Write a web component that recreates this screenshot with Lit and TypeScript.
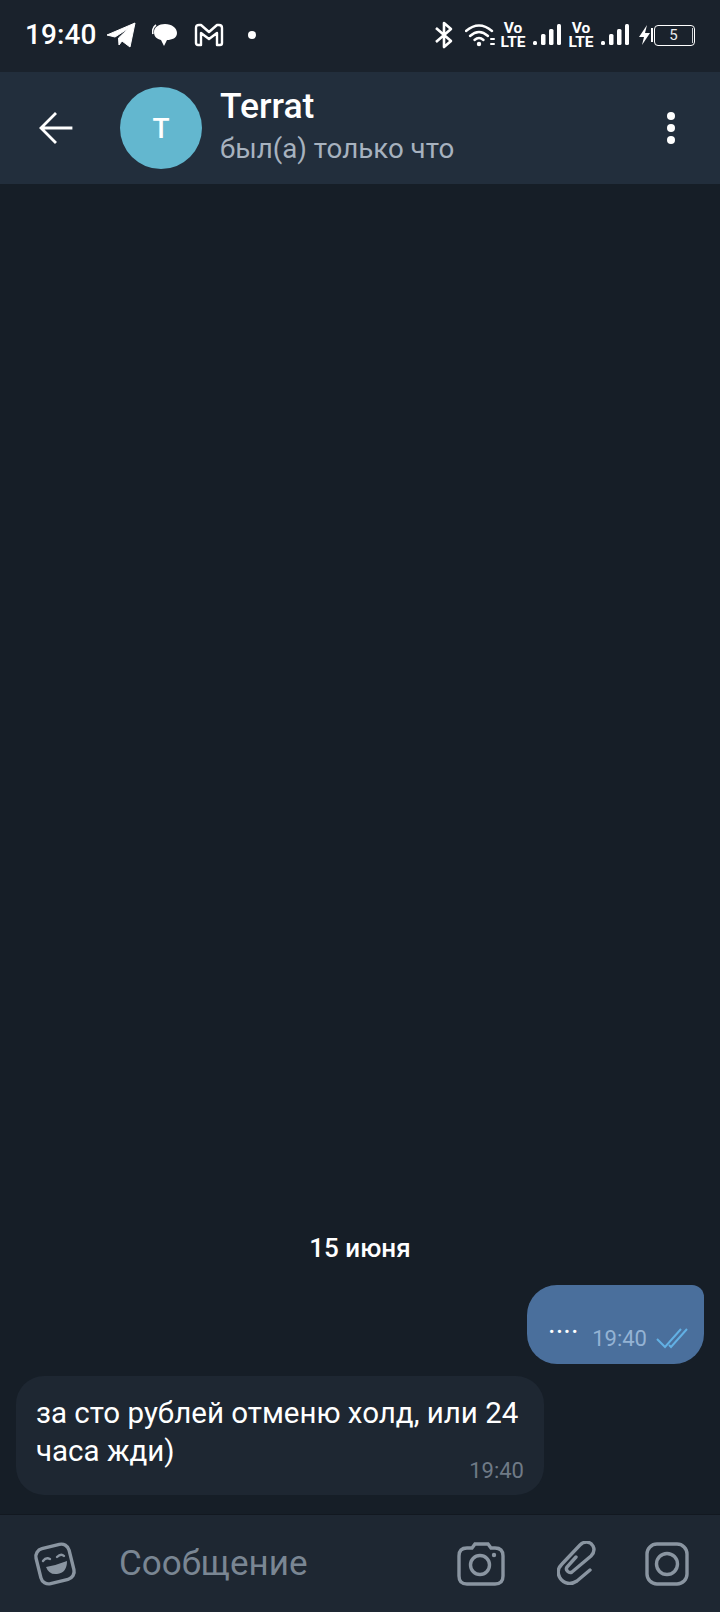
import { LitElement, html, css } from "lit";
import { customElement } from "lit/decorators.js";

@customElement("app-root")
export class AppRoot extends LitElement {
  static styles = css`
    :host { display: block; width: 720px; height: 1612px; overflow: hidden; background: #161e27; font-family: Roboto, "Noto Sans", sans-serif; color: #fff; }
    .page { display: flex; flex-direction: column; height: 1612px; }
    svg { display: block; flex: none; }
    .status { height: 72px; flex: none; background: #1a222c; display: flex; align-items: center; padding: 0 25px 2px 25px; box-sizing: border-box; }
    .clock { font-size: 28px; font-weight: 500; letter-spacing: 0.1px; width: 81px; line-height: 32px; }
    .left { display: flex; align-items: center; }
    .tg { margin-right: 16px; }
    .bub { margin-right: 16px; }
    .gm { margin-right: 24px; }
    .spacer { flex: 1; }
    .right { display: flex; align-items: center; }
    .bt { margin-right: 11px; }
    .wifi { margin-right: 5px; }
    .volte { font-weight: 700; font-size: 15.5px; line-height: 14px; width: 26px; text-align: center; white-space: pre-line; }
    .bars { margin: 0 7px; }
    .bars.last { margin-right: 9px; }
    .batt { width: 41px; height: 21px; box-sizing: border-box; border: 1.5px solid #fff; border-radius: 4px; font-size: 15px; line-height: 18px; text-align: center; color: #e8eaec; position: relative; padding-right: 2px; }
    .batt::after { content: ""; position: absolute; right: 1px; top: 2px; bottom: 2px; width: 1.5px; background: #cfd3d6; }
    .header { height: 112px; flex: none; background: #222e3c; display: flex; align-items: center; box-sizing: border-box; padding: 0 0 0 39px; }
    .back { margin-right: 47px; }
    .avatar { width: 82px; height: 82px; border-radius: 50%; background: #63b7cf; display: flex; align-items: center; justify-content: center; font-size: 28px; font-weight: 500; margin-right: 18px; flex: none; }
    .who { flex: 1; display: flex; flex-direction: column; margin-top: -2px; }
    .name { font-size: 35.5px; font-weight: 500; line-height: 40px; }
    .seen { font-size: 27.7px; line-height: 40px; color: #a7b2bf; margin-top: 3px; }
    .more { margin-right: 44px; }
    .chat { flex: 1; display: flex; flex-direction: column; justify-content: flex-end; padding: 0 16px 19px; }
    .date { align-self: center; font-size: 26px; font-weight: 500; line-height: 32px; margin-bottom: 21px; }
    .out { align-self: flex-end; width: 177px; height: 79px; box-sizing: border-box; background: #4a6f9c; border-radius: 30px 12px 30px 30px; display: flex; align-items: flex-end; padding: 0 16px 11px 21px; margin-bottom: 12px; }
    .out .txt { font-size: 29px; line-height: 40px; width: 46px; margin-bottom: 10px; }
    .out .time { font-size: 22px; color: #94b3d4; line-height: 28px; margin-right: 9px; }
    .in { align-self: flex-start; width: 528px; height: 119px; box-sizing: border-box; background: #1e2732; border-radius: 28px; padding: 18px 20px 0 20px; display: grid; }
    .in > * { grid-area: 1 / 1; }
    .lines { display: flex; flex-direction: column; align-items: flex-start; }
    .lines span { font-size: 29.5px; line-height: 38px; white-space: nowrap; }
    .in .time { justify-self: end; align-self: end; font-size: 22px; line-height: 28px; color: #6f7a86; margin-bottom: 10px; }
    .composer { height: 98px; flex: none; background: #1e2732; display: flex; align-items: center; padding: 0 31px 0 33px; box-sizing: border-box; border-top: 1px solid #121820; }
    .ph { flex: 1; font-size: 35px; color: #7a8693; margin-left: 42px; line-height: 40px; }
    .cam { margin-right: 52px; }
    .clip { margin-right: 49px; }
  `;

  render() {
    const ico = "#8a95a1";
    const bars = (last: boolean) => html`<svg class="bars ${last ? "last" : ""}" width="28" height="22" viewBox="0 0 28 22" fill="#fff">
      <rect x="0" y="17" width="4" height="4" rx="1.5"/><rect x="8" y="10" width="4.5" height="11" rx="1.5"/><rect x="16" y="5" width="4.5" height="16" rx="1.5"/><rect x="24" y="0" width="4" height="21" rx="1.5"/></svg>`;
    const volte = "Vo\nLTE";
    return html`<div class="page">
      <div class="status">
        <div class="left">
          <div class="clock">19:40</div>
          <svg class="tg" width="30" height="26" viewBox="0 0 30 26"><path d="M1 13 L29 1 L24 25 L16 19 L13 23 L12.5 16 L23 6 L9 15 Z" fill="#fff" stroke="#fff" stroke-linejoin="round"/></svg>
          <svg class="bub" width="26" height="26" viewBox="0 0 26 26"><path d="M4 3 C1 5 0 9 1 12" stroke="#fff" stroke-width="1.6" fill="none"/><path d="M13 2 C20 2 25 6 25 11 C25 16 20 18 15 18 L12 24 L9 18 C5 17 2 15 2 10 C2 5 7 2 13 2 Z" fill="#fff"/></svg>
          <svg class="gm" width="30" height="24" viewBox="0 0 30 24" fill="none" stroke="#fff" stroke-width="2.4" stroke-linejoin="round"><path d="M2 5 Q2 2 5 2 L7 2 L15 9 L23 2 L25 2 Q28 2 28 5 L28 20 Q28 22 26 22 L23 22 L23 10 L15 16 L7 10 L7 22 L4 22 Q2 22 2 20 Z"/></svg>
          <svg width="8" height="8" viewBox="0 0 8 8"><circle cx="4" cy="4" r="4" fill="#fff"/></svg>
        </div>
        <div class="spacer"></div>
        <div class="right">
          <svg class="bt" width="20" height="28" viewBox="0 0 20 28" fill="none" stroke="#fff" stroke-width="2.6" stroke-linejoin="round"><path d="M2 7 L17 20 L10 26 L10 2 L17 8 L2 21"/></svg>
          <svg class="wifi" width="30" height="26" viewBox="0 0 30 26" fill="none" stroke="#fff" stroke-width="2.4" stroke-linecap="round"><path d="M1 9 Q14 -2 27 9"/><path d="M5 14 Q14 6 23 14"/><path d="M9.5 18 Q14 14 18.5 18"/><circle cx="14" cy="22" r="2.2" fill="#fff" stroke="none"/><path d="M26 17 h3 M26 22 h3" stroke-width="2" /></svg>
          <div class="volte">${volte}</div>
          ${bars(false)}
          <div class="volte">${volte}</div>
          ${bars(true)}
          <svg width="13" height="22" viewBox="0 0 13 22"><path d="M9 1 L1 13 L6 13 L4 21 L12 9 L7 9 Z" fill="#fff"/></svg>
          <svg width="3" height="14" viewBox="0 0 3 14"><rect width="2" height="14" fill="#fff"/></svg>
          <div class="batt">5</div>
        </div>
      </div>
      <div class="header">
        <svg class="back" width="34" height="32" viewBox="0 0 34 32" fill="none" stroke="#fff" stroke-width="2.8" stroke-linecap="square"><path d="M32 16 L3 16 M16 2 L2 16 L16 30"/></svg>
        <div class="avatar">T</div>
        <div class="who">
          <div class="name">Terrat</div>
          <div class="seen">был(а) только что</div>
        </div>
        <svg class="more" width="10" height="34" viewBox="0 0 10 34" fill="#fff"><circle cx="5" cy="5" r="4"/><circle cx="5" cy="17" r="4"/><circle cx="5" cy="29" r="4"/></svg>
      </div>
      <div class="chat">
        <div class="date">15 июня</div>
        <div class="out">
          <div class="txt">....</div>
          <div class="time">19:40</div>
          <svg width="32" height="22" viewBox="0 0 32 22" fill="none" stroke="#62b0e4" stroke-width="2" style="margin-bottom:4px"><path d="M1 12 L9 20 L25 2 M13 18 L15 20 L31 2"/></svg>
        </div>
        <div class="in">
          <div class="lines"><span>за сто рублей отменю холд, или 24</span><span>часа жди)</span></div>
          <div class="time">19:40</div>
        </div>
      </div>
      <div class="composer">
        <svg width="44" height="46" viewBox="0 0 44 46" fill="none" stroke="${ico}" stroke-width="3.4"><rect x="5" y="5" width="34" height="36" rx="8" transform="rotate(-14 22 23)"/><path d="M10 20 Q13 16 17 18 M24 16 Q28 12 31 15" stroke-width="2.4" stroke-linecap="round"/><path d="M13 26 Q24 24 34 20 Q34 32 24 33 Q16 34 13 26 Z" fill="${ico}" stroke="none"/></svg>
        <div class="ph">Сообщение</div>
        <svg class="cam" width="48" height="46" viewBox="0 0 48 46" fill="none" stroke="${ico}" stroke-width="3.4"><path d="M10 7 L15 7 L18 3 L31 3 L34 7 L38 7 Q46 7 46 15 L46 35 Q46 43 38 43 L10 43 Q2 43 2 35 L2 15 Q2 7 10 7 Z"/><circle cx="23" cy="24" r="9.5"/><circle cx="37" cy="14" r="2.2" fill="${ico}" stroke="none"/></svg>
        <svg class="clip" width="39" height="46" viewBox="0 0 39 46" fill="none" stroke="${ico}" stroke-width="3.4" stroke-linecap="round"><path d="M33 29 L20 40 C14 44 7 43 3 37 C0 32 1 27 5 23 L23 4 C27 0 33 0 36 5 C38 9 37 12 34 15 L15 31 C12 33 8 29 10 26 L19 16"/></svg>
        <svg width="44" height="44" viewBox="0 0 44 44" fill="none" stroke="${ico}" stroke-width="3.4"><rect x="2" y="2" width="40" height="40" rx="10"/><circle cx="22" cy="22" r="10.5"/></svg>
      </div>
    </div>`;
  }
}
